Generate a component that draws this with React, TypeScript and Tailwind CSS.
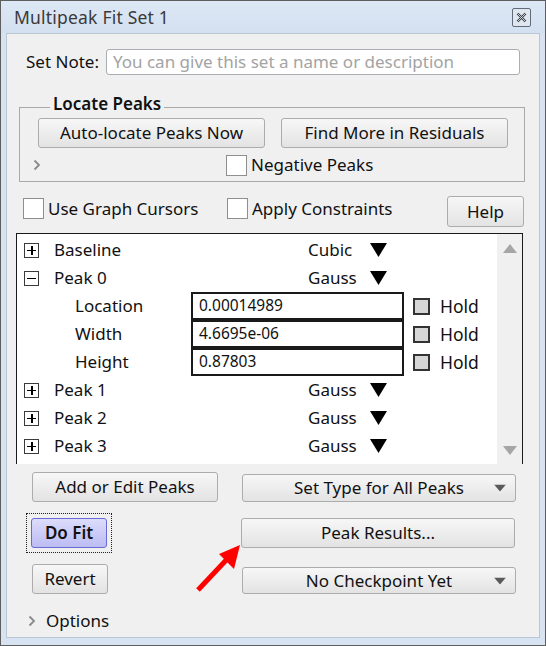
import React from "react";

const font = { fontFamily: '"Noto Sans", "Open Sans", sans-serif' };

function Btn({
  children,
  className = "",
  arrow = false,
}: {
  children: React.ReactNode;
  className?: string;
  arrow?: boolean;
}) {
  return (
    <div
      className={`relative flex items-center justify-center rounded-[3px] border border-[#acacac] bg-gradient-to-b from-[#f7f7f7] to-[#e3e3e3] text-[17px] text-[#111] ${className}`}
    >
      {children}
      {arrow && (
        <svg className="absolute right-[9px] top-1/2 -translate-y-1/2" width="12" height="7" viewBox="0 0 12 7">
          <polygon points="0,0 12,0 6,7" fill="#5a5a5a" />
        </svg>
      )}
    </div>
  );
}

function Check({ className = "" }: { className?: string }) {
  return <div className={`h-[21px] w-[21px] shrink-0 border border-[#8e8f8f] bg-white ${className}`} />;
}

function Chevron() {
  return (
    <svg width="8" height="12" viewBox="0 0 8 12">
      <polyline points="1.5,1.5 6,6 1.5,10.5" fill="none" stroke="#8a8a8a" strokeWidth="1.8" />
    </svg>
  );
}

function Expander({ open }: { open: boolean }) {
  return (
    <div className="relative h-[15px] w-[15px] shrink-0 border border-[#3a3a3a] bg-white">
      <div className="absolute left-[2px] right-[2px] top-[6px] h-[1.5px] bg-black" />
      {!open && <div className="absolute bottom-[2px] top-[2px] left-[6px] w-[1.5px] bg-black" />}
    </div>
  );
}

function Tri() {
  return (
    <svg width="17" height="14" viewBox="0 0 17 14">
      <polygon points="0,0 17,0 8.5,14" fill="#000" />
    </svg>
  );
}

function TypeRow({ open, label, type }: { open: boolean; label: string; type: string }) {
  return (
    <div className="flex h-[28px] items-center">
      <div className="ml-[7px]">
        <Expander open={open} />
      </div>
      <span className="ml-[15px] w-[254px]">{label}</span>
      <span className="w-[62px]">{type}</span>
      <Tri />
    </div>
  );
}

function ParamRow({ label, value }: { label: string; value: string }) {
  return (
    <div className="flex h-[28px] items-center">
      <span className="ml-[58px] w-[116px]">{label}</span>
      <div className="flex h-[28px] w-[213px] items-center border-2 border-[#1a1a1a] bg-white pl-[6px] text-[15.5px]">
        {value}
      </div>
      <div className="ml-[9px] h-[17px] w-[17px] border-2 border-[#333] bg-[#d6d6d6]" />
      <span className="ml-[10px] text-[17.5px]">Hold</span>
    </div>
  );
}

export default function App() {
  return (
    <div
      className="flex h-[646px] w-[546px] flex-col border border-[#5e5e5e] bg-[#d7e3f1] text-[17px] text-[#111]"
      style={font}
    >
      {/* title bar */}
      <div className="flex h-[32px] shrink-0 items-center bg-gradient-to-b from-[#dde8f5] to-[#d3e0f0] pl-[13px] pr-[14px]">
        <span className="text-[17.5px] tracking-[0.2px] text-[#3a3a3a]">Multipeak Fit Set 1</span>
        <div className="ml-auto flex h-[19px] w-[19px] items-center justify-center rounded-[2px] border border-[#5f6b7a] bg-[#dfe6ee]">
          <svg width="11" height="11" viewBox="0 0 11 11">
            <path d="M1.5 1.5 L9.5 9.5 M9.5 1.5 L1.5 9.5" stroke="#333d48" strokeWidth="2.4" />
            <path d="M1.5 1.5 L9.5 9.5 M9.5 1.5 L1.5 9.5" stroke="#f4f6f9" strokeWidth="0.8" />
          </svg>
        </div>
      </div>

      {/* content */}
      <div className="relative mx-[5px] mb-[7px] flex flex-1 flex-col border border-[#b9c6d6] bg-[#f0f0f0]">
        {/* set note */}
        <div className="mt-[15px] flex h-[26px] items-center pl-[19px]">
          <span>Set Note:</span>
          <div className="ml-[7px] flex h-[26px] w-[414px] items-center rounded-[3px] border border-[#abadb3] bg-white pl-[6px] text-[#a3a3a3]">
            You can give this set a name or description
          </div>
        </div>

        {/* locate peaks group */}
        <div className="relative ml-[12px] mt-[32px] h-[75px] w-[506px] border border-[#a9a9a9]">
          <span className="absolute -top-[17px] left-[30px] bg-[#f0f0f0] px-[3px] font-semibold">Locate Peaks</span>
          <div className="mt-[10px] flex gap-[16px] pl-[18px]">
            <Btn className="h-[30px] w-[227px]">Auto-locate Peaks Now</Btn>
            <Btn className="h-[30px] w-[227px]">Find More in Residuals</Btn>
          </div>
          <div className="mt-[6px] flex h-[22px] items-center">
            <div className="ml-[13px]">
              <Chevron />
            </div>
            <Check className="ml-[185px]" />
            <span className="ml-[4px]">Negative Peaks</span>
          </div>
        </div>

        {/* options row */}
        <div className="mt-[14px] flex h-[31px] items-start">
          <Check className="ml-[16px] mt-[2px]" />
          <span className="ml-[4px] w-[179px]">Use Graph Cursors</span>
          <Check className="mt-[2px]" />
          <span className="ml-[4px]">Apply Constraints</span>
          <Btn className="ml-auto mr-[15px] h-[31px] w-[77px]">Help</Btn>
        </div>

        {/* peak list */}
        <div className="ml-[9px] mt-[6px] flex h-[231px] w-[507px] border-x border-t border-[#1a1a1a] bg-white">
          <div className="flex-1 overflow-hidden pt-[2px]">
            <TypeRow open={false} label="Baseline" type="Cubic" />
            <TypeRow open label="Peak 0" type="Gauss" />
            <ParamRow label="Location" value="0.00014989" />
            <ParamRow label="Width" value="4.6695e-06" />
            <ParamRow label="Height" value="0.87803" />
            <TypeRow open={false} label="Peak 1" type="Gauss" />
            <TypeRow open={false} label="Peak 2" type="Gauss" />
            <TypeRow open={false} label="Peak 3" type="Gauss" />
          </div>
          <div className="flex w-[25px] flex-col items-center justify-between bg-[#f0f0f0] pb-[9px] pt-[10px]">
            <svg width="14" height="9" viewBox="0 0 14 9">
              <polygon points="0,9 14,9 7,0" fill="#a6a6a6" />
            </svg>
            <svg width="14" height="9" viewBox="0 0 14 9">
              <polygon points="0,0 14,0 7,9" fill="#a6a6a6" />
            </svg>
          </div>
        </div>

        {/* action buttons */}
        <div className="mt-[8px] flex items-end">
          <Btn className="ml-[25px] h-[30px] w-[186px]">Add or Edit Peaks</Btn>
          <Btn arrow className="ml-[24px] h-[28px] w-[274px]">Set Type for All Peaks</Btn>
        </div>
        <div className="mt-[11px] flex items-center">
          <div className="ml-[19px] border border-dotted border-[#222] p-[4px]">
            <div className="flex h-[30px] w-[76px] items-center justify-center rounded-[3px] border border-[#6a6ad6] bg-gradient-to-b from-[#dcdcfb] to-[#bcbcf3] font-semibold">
              Do Fit
            </div>
          </div>
          <Btn className="ml-[129px] h-[30px] w-[274px]">Peak Results...</Btn>
        </div>
        <div className="mt-[11px] flex items-end">
          <Btn className="ml-[25px] h-[30px] w-[76px]">Revert</Btn>
          <Btn arrow className="ml-[134px] h-[27px] w-[274px]">No Checkpoint Yet</Btn>
        </div>
        <div className="mt-[14px] flex items-center">
          <div className="ml-[21px]">
            <Chevron />
          </div>
          <span className="ml-[10px]">Options</span>
        </div>

        {/* annotation arrow */}
        <svg className="absolute left-[185px] top-[506px]" width="56" height="56" viewBox="0 0 56 56">
          <line x1="6" y1="50" x2="38" y2="16" stroke="#f00" strokeWidth="5" />
          <polygon points="48,5 42,29 27,14" fill="#f00" />
        </svg>
      </div>
    </div>
  );
}
